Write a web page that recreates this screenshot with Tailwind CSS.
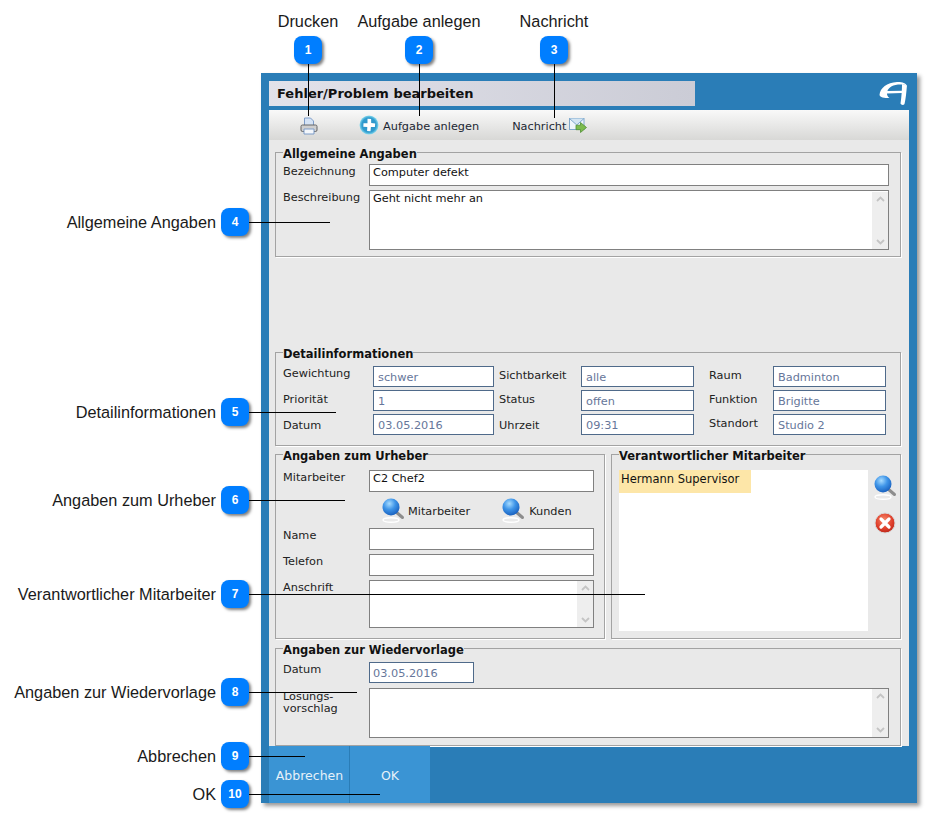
<!DOCTYPE html>
<html lang="de">
<head>
<meta charset="UTF-8">
<meta name="viewport" content="width=device-width,initial-scale=1">
<title>Fehler/Problem bearbeiten</title>
<script src="https://cdn.jsdelivr.net/npm/@tailwindcss/browser@4"></script>
</head>
<body class="bg-white font-['DejaVu_Sans',sans-serif] text-[11.3px] leading-[14px] text-[#222]">
<svg width="0" height="0" class="absolute">
  <defs>
    <radialGradient id="lens" cx="40%" cy="30%" r="70%"><stop offset="0" stop-color="#a8dcff"/><stop offset=".5" stop-color="#3f95e8"/><stop offset="1" stop-color="#1a62c0"/></radialGradient>
    <radialGradient id="redball" cx="45%" cy="35%" r="70%"><stop offset="0" stop-color="#f58a6c"/><stop offset=".6" stop-color="#e0402c"/><stop offset="1" stop-color="#b52418"/></radialGradient>
    <radialGradient id="plusball" cx="50%" cy="50%" r="52%"><stop offset="0" stop-color="#2f8fc4"/><stop offset=".72" stop-color="#2f9ccf"/><stop offset="1" stop-color="#93e2f2"/></radialGradient>
    <symbol id="magnifier" viewBox="0 0 24 26">
      <ellipse cx="10" cy="23" rx="8" ry="2.2" fill="none" stroke="#fff" stroke-width="1.4"/>
      <path d="M14.5 14.5l7 6" stroke="#8d8d8d" stroke-width="3" stroke-linecap="round"/>
      <circle cx="10" cy="10" r="8.5" fill="url(#lens)"/>
    </symbol>
  </defs>
</svg>

<div class="relative w-[926px] h-[820px] overflow-hidden pt-[73px] pl-[261px]">
  <!-- dialog -->
  <div class="w-[656px] h-[730px] bg-[#2a7db7] shadow-[3px_3px_4px_rgba(0,0,0,0.4)] pl-[8px] pr-[8px] flex flex-col">
    <div class="h-[37px] shrink-0 flex justify-between">
      <div class="mt-[8px] w-[426px] h-[25px] bg-gradient-to-r from-[#e2e2ea] to-[#cbccd6] pl-[8px] font-bold text-[13px] leading-[25px] text-[#111]">Fehler/Problem bearbeiten</div>
      <svg class="mt-[8px] mr-[1px]" width="30" height="25" viewBox="0 0 30 25" fill="#fff">
        <path d="M1.5 14C2 7 9 1.5 19 1c5-.2 9 1 10 4-2-1.500-5-1.800-9-1.400-7 .7-10 4.400-10.500 6.400L24 9.700V12l-15 .5c0 1.500.5 3 2.500 4.500-5.500 0-9.500-.5-10-3z"/>
        <path d="M24 3l5 1.500c-.5 4.500-1 12.500-2.500 18.500-1 1.500-3.500 1-4-.5 1-6.500 1.500-13.500 1.500-19.500z"/>
      </svg>
    </div>

    <div class="flex-1 flex flex-col min-h-0 bg-[#e9e9e9]">
      <!-- toolbar -->
      <div class="h-[30px] shrink-0 bg-gradient-to-b from-[#f9f9f9] to-[#d8d8d6] flex items-center pl-[31px] text-[#1c2733]">
        <svg width="18" height="18" viewBox="0 0 18 18" fill="none" class="mt-[1px]">
          <path d="M4.500 1h6l3 3v5h-9z" fill="#d5e3f5" stroke="#7d9cc8"/>
          <rect x="1" y="8" width="16" height="6.500" rx="1.500" fill="#cfcfcf" stroke="#666"/>
          <path d="M4 12h10v5H4z" fill="#f4f7fb" stroke="#7d9cc8"/>
        </svg>
        <svg width="20" height="20" viewBox="0 0 20 20" class="ml-[41px] mt-[-1px]">
          <circle cx="10" cy="10" r="9.500" fill="url(#plusball)"/>
          <path d="M8.500 3.800l3.600.3.100 3.900 4 .4-.3 3.500-4 .1-.4 4.200-3.400-.2.200-4.100-4-.1.200-3.600 4 .1z" fill="#fff"/>
        </svg>
        <span class="ml-[4px] mt-[3px]">Aufgabe anlegen</span>
        <span class="ml-[33px] mt-[3px]">Nachricht</span>
        <svg width="18" height="16" viewBox="0 0 18 16" class="ml-[3px] mt-[2px]">
          <rect x=".5" y=".5" width="14.500" height="11" fill="#eef5fb" stroke="#7fa8cc"/>
          <path d="M.5 .5l7.250 6.500L15 .5" fill="#d3e5f3" stroke="#7fa8cc"/>
          <path d="M7 7.200h4.500V4.500L17.500 9.500 11.500 14.500v-2.800H7z" fill="#7dbb4e" stroke="#4f8f34" stroke-width=".8"/>
        </svg>
      </div>

      <!-- form -->
      <div class="flex-1 min-h-0 pl-[6px] pr-[8px] pt-[5px] flex flex-col">
        <fieldset class="h-[112px] shrink-0 border border-[#a3a3a3] shadow-[1px_1px_0_#fff] pl-[7px] pr-[11px] pt-[5px]">
          <legend class="font-bold text-[11.5px] text-[#111] translate-y-[2px]">Allgemeine Angaben</legend>
          <div class="grid grid-cols-[86px_1fr] gap-y-[4px]">
            <label class="pt-[1px]">Bezeichnung</label>
            <input readonly value="Computer defekt" class="h-[22px] border border-[#808080] bg-white px-[3px] pb-[5px] text-[#111]">
            <label class="pt-[1px]">Beschreibung</label>
            <div class="h-[60px] border border-[#808080] bg-white pl-[3px] pt-[1px] flex justify-between text-[#111]">
              <span>Geht nicht mehr an</span>
              <div class="w-[16px] bg-[#eeeeee] flex flex-col justify-between items-center py-[4px]">
                <svg width="9" height="6" viewBox="0 0 9 6" fill="none" stroke="#c4c4c4" stroke-width="1.800"><path d="M1 5l3.500-3.500L8 5"/></svg>
                <svg width="9" height="6" viewBox="0 0 9 6" fill="none" stroke="#c4c4c4" stroke-width="1.800"><path d="M1 1l3.500 3.500L8 1"/></svg>
              </div>
            </div>
          </div>
        </fieldset>

        <fieldset class="h-[101px] shrink-0 mt-[88px] border border-[#a3a3a3] shadow-[1px_1px_0_#fff] pl-[7px] pt-[7px]">
          <legend class="font-bold text-[11.5px] text-[#111] translate-y-[2px]">Detailinformationen</legend>
          <div class="flex">
            <div class="grid grid-cols-[90px_121px] gap-y-[3px]">
              <label class="pt-[1px]">Gewichtung</label>
              <input readonly value="schwer" class="h-[21px] border border-[#4f6a8a] bg-white px-[4px] pt-[1px] text-[#66769a]">
              <label class="pt-[3px]">Priorität</label>
              <input readonly value="1" class="h-[21px] border border-[#4f6a8a] bg-white px-[4px] pt-[1px] text-[#66769a]">
              <label class="pt-[5px]">Datum</label>
              <input readonly value="03.05.2016" class="h-[21px] border border-[#4f6a8a] bg-white px-[4px] pt-[1px] text-[#66769a]">
            </div>
            <div class="ml-[5px] grid grid-cols-[82px_113px] gap-y-[3px]">
              <label class="pt-[3px]">Sichtbarkeit</label>
              <input readonly value="alle" class="h-[21px] border border-[#4f6a8a] bg-white px-[4px] pt-[1px] text-[#66769a]">
              <label class="pt-[3px]">Status</label>
              <input readonly value="offen" class="h-[21px] border border-[#4f6a8a] bg-white px-[4px] pt-[1px] text-[#66769a]">
              <label class="pt-[5px]">Uhrzeit</label>
              <input readonly value="09:31" class="h-[21px] border border-[#4f6a8a] bg-white px-[4px] pt-[1px] text-[#66769a]">
            </div>
            <div class="ml-[15px] grid grid-cols-[64px_113px] gap-y-[3px]">
              <label class="pt-[3px]">Raum</label>
              <input readonly value="Badminton" class="h-[21px] border border-[#4f6a8a] bg-white px-[4px] pt-[1px] text-[#66769a]">
              <label class="pt-[3px]">Funktion</label>
              <input readonly value="Brigitte" class="h-[21px] border border-[#4f6a8a] bg-white px-[4px] pt-[1px] text-[#66769a]">
              <label class="pt-[3px]">Standort</label>
              <input readonly value="Studio 2" class="h-[21px] border border-[#4f6a8a] bg-white px-[4px] pt-[1px] text-[#66769a]">
            </div>
          </div>
        </fieldset>

        <div class="h-[192px] shrink-0 mt-[1px] flex gap-[6px]">
          <fieldset class="w-[330px] border border-[#a3a3a3] shadow-[1px_1px_0_#fff] pl-[7px] pt-[9px]">
            <legend class="font-bold text-[11.5px] text-[#111] translate-y-[2px]">Angaben zum Urheber</legend>
            <div class="grid grid-cols-[86px_225px]">
              <label class="pt-[1px]">Mitarbeiter</label>
              <input readonly value="C2 Chef2" class="h-[22px] border border-[#808080] bg-white px-[3px] pb-[5px] text-[#111]">
              <div class="col-start-2 h-[36px] flex items-center">
                <svg width="24" height="26" class="ml-[12px] mt-[-1px]"><use href="#magnifier"/></svg>
                <span class="ml-[3px] mt-[4px]">Mitarbeiter</span>
                <svg width="24" height="26" class="ml-[31px] mt-[-1px]"><use href="#magnifier"/></svg>
                <span class="ml-[4px] mt-[4px]">Kunden</span>
              </div>
              <label class="pt-[1px]">Name</label>
              <input readonly class="h-[22px] border border-[#808080] bg-white">
              <label class="mt-[4px] pt-[1px]">Telefon</label>
              <input readonly class="mt-[4px] h-[22px] border border-[#808080] bg-white">
              <label class="mt-[4px] pt-[1px]">Anschrift</label>
              <div class="mt-[4px] h-[48px] border border-[#808080] bg-white flex justify-end">
                <div class="w-[16px] bg-[#eeeeee] flex flex-col justify-between items-center py-[4px]">
                  <svg width="9" height="6" viewBox="0 0 9 6" fill="none" stroke="#c4c4c4" stroke-width="1.800"><path d="M1 5l3.500-3.500L8 5"/></svg>
                  <svg width="9" height="6" viewBox="0 0 9 6" fill="none" stroke="#c4c4c4" stroke-width="1.800"><path d="M1 1l3.500 3.500L8 1"/></svg>
                </div>
              </div>
            </div>
          </fieldset>
          <fieldset class="w-[290px] border border-[#a3a3a3] shadow-[1px_1px_0_#fff] pl-[7px] pt-[9px]">
            <legend class="font-bold text-[11.5px] text-[#111] translate-y-[2px]">Verantwortlicher Mitarbeiter</legend>
            <div class="flex">
              <div class="w-[249px] h-[161px] bg-white">
                <div class="w-[132px] h-[23px] bg-[#fde6a8] pl-[2px] pt-[2px] text-[11.5px] text-[#111]">Hermann Supervisor</div>
              </div>
              <div class="flex flex-col items-center pl-[5px]">
                <svg width="24" height="26" class="mt-[4px]"><use href="#magnifier"/></svg>
                <svg width="22" height="22" viewBox="0 0 22 22" class="mt-[12px]">
                  <circle cx="11" cy="11" r="10" fill="url(#redball)" stroke="#d9d9d9"/>
                  <path d="M7 7l8 8M15 7l-8 8" stroke="#fff" stroke-width="3.200" stroke-linecap="round"/>
                </svg>
              </div>
            </div>
          </fieldset>
        </div>

        <fieldset class="h-[105px] shrink-0 mt-[2px] border border-[#a3a3a3] shadow-[1px_1px_0_#fff] pl-[7px] pr-[11px] pt-[7px]">
          <legend class="font-bold text-[11.5px] text-[#111] translate-y-[2px]">Angaben zur Wiedervorlage</legend>
          <div class="grid grid-cols-[86px_1fr] gap-y-[5px]">
            <label class="pt-[1px]">Datum</label>
            <input readonly value="03.05.2016" class="w-[105px] h-[21px] border border-[#4f6a8a] bg-white px-[3px] pt-[1px] text-[#66769a]">
            <label class="leading-[12px] pt-[3px]">Lösungs-<br>vorschlag</label>
            <div class="h-[50px] border border-[#808080] bg-white flex justify-end">
              <div class="w-[16px] bg-[#eeeeee] flex flex-col justify-between items-center py-[4px]">
                <svg width="9" height="6" viewBox="0 0 9 6" fill="none" stroke="#c4c4c4" stroke-width="1.800"><path d="M1 5l3.500-3.500L8 5"/></svg>
                <svg width="9" height="6" viewBox="0 0 9 6" fill="none" stroke="#c4c4c4" stroke-width="1.800"><path d="M1 1l3.500 3.500L8 1"/></svg>
              </div>
            </div>
          </div>
        </fieldset>
      </div>
    </div>

    <!-- footer -->
    <div class="h-[57px] shrink-0 flex text-[12.5px] text-[#e6f1f9]">
      <button class="w-[81px] bg-[#3a94d4] border-r border-[#2a7db7] pt-[2px] pl-[1px]">Abbrechen</button>
      <button class="w-[80px] bg-[#3a94d4] pt-[2px]">OK</button>
    </div>
  </div>

  <!-- callouts on top -->
  <div class="absolute top-[11px] left-[248px] w-[120px] flex flex-col items-center font-['Liberation_Sans',sans-serif]">
    <span class="text-[16.3px] leading-[20px] text-[#1a1a1a] mb-[5px]">Drucken</span>
    <span class="w-[28px] h-[28px] rounded-lg bg-[#007eff] text-white font-bold text-[12px] flex items-center justify-center shadow-[2px_2px_3px_rgba(0,0,0,0.5)]">1</span>
    <span class="w-[1px] h-[52px] bg-black"></span>
  </div>
  <div class="absolute top-[11px] left-[349px] w-[140px] flex flex-col items-center font-['Liberation_Sans',sans-serif]">
    <span class="text-[16.3px] leading-[20px] text-[#1a1a1a] mb-[5px]">Aufgabe anlegen</span>
    <span class="w-[28px] h-[28px] rounded-lg bg-[#007eff] text-white font-bold text-[12px] flex items-center justify-center shadow-[2px_2px_3px_rgba(0,0,0,0.5)]">2</span>
    <span class="w-[1px] h-[52px] bg-black"></span>
  </div>
  <div class="absolute top-[11px] left-[494px] w-[120px] flex flex-col items-center font-['Liberation_Sans',sans-serif]">
    <span class="text-[16.3px] leading-[20px] text-[#1a1a1a] mb-[5px]">Nachricht</span>
    <span class="w-[28px] h-[28px] rounded-lg bg-[#007eff] text-white font-bold text-[12px] flex items-center justify-center shadow-[2px_2px_3px_rgba(0,0,0,0.5)]">3</span>
    <span class="w-[1px] h-[54px] bg-black"></span>
  </div>

  <div class="absolute left-0 top-[208px] flex items-center font-['Liberation_Sans',sans-serif]">
    <span class="w-[216px] text-right text-[16.3px] leading-[22px] text-[#1a1a1a]">Allgemeine Angaben</span>
    <span class="ml-[5px] w-[28px] h-[28px] rounded-lg bg-[#007eff] text-white font-bold text-[12px] flex items-center justify-center shadow-[2px_2px_3px_rgba(0,0,0,0.5)]">4</span>
    <span class="w-[81px] h-[1px] bg-black"></span>
  </div>
  <div class="absolute left-0 top-[398px] flex items-center font-['Liberation_Sans',sans-serif]">
    <span class="w-[216px] text-right text-[16.3px] leading-[22px] text-[#1a1a1a]">Detailinformationen</span>
    <span class="ml-[5px] w-[28px] h-[28px] rounded-lg bg-[#007eff] text-white font-bold text-[12px] flex items-center justify-center shadow-[2px_2px_3px_rgba(0,0,0,0.5)]">5</span>
    <span class="w-[87px] h-[1px] bg-black"></span>
  </div>
  <div class="absolute left-0 top-[486px] flex items-center font-['Liberation_Sans',sans-serif]">
    <span class="w-[216px] text-right text-[16.3px] leading-[22px] text-[#1a1a1a]">Angaben zum Urheber</span>
    <span class="ml-[5px] w-[28px] h-[28px] rounded-lg bg-[#007eff] text-white font-bold text-[12px] flex items-center justify-center shadow-[2px_2px_3px_rgba(0,0,0,0.5)]">6</span>
    <span class="w-[96px] h-[1px] bg-black"></span>
  </div>
  <div class="absolute left-0 top-[580px] flex items-center font-['Liberation_Sans',sans-serif]">
    <span class="w-[216px] text-right text-[16.3px] leading-[22px] text-[#1a1a1a]">Verantwortlicher Mitarbeiter</span>
    <span class="ml-[5px] w-[28px] h-[28px] rounded-lg bg-[#007eff] text-white font-bold text-[12px] flex items-center justify-center shadow-[2px_2px_3px_rgba(0,0,0,0.5)]">7</span>
    <span class="w-[396px] h-[1px] bg-black"></span>
  </div>
  <div class="absolute left-0 top-[678px] flex items-center font-['Liberation_Sans',sans-serif]">
    <span class="w-[216px] text-right text-[16.3px] leading-[22px] text-[#1a1a1a]">Angaben zur Wiedervorlage</span>
    <span class="ml-[5px] w-[28px] h-[28px] rounded-lg bg-[#007eff] text-white font-bold text-[12px] flex items-center justify-center shadow-[2px_2px_3px_rgba(0,0,0,0.5)]">8</span>
    <span class="w-[108px] h-[1px] bg-black"></span>
  </div>
  <div class="absolute left-0 top-[742px] flex items-center font-['Liberation_Sans',sans-serif]">
    <span class="w-[216px] text-right text-[16.3px] leading-[22px] text-[#1a1a1a]">Abbrechen</span>
    <span class="ml-[5px] w-[28px] h-[28px] rounded-lg bg-[#007eff] text-white font-bold text-[12px] flex items-center justify-center shadow-[2px_2px_3px_rgba(0,0,0,0.5)]">9</span>
    <span class="w-[56px] h-[1px] bg-black"></span>
  </div>
  <div class="absolute left-0 top-[780px] flex items-center font-['Liberation_Sans',sans-serif]">
    <span class="w-[216px] text-right text-[16.3px] leading-[22px] text-[#1a1a1a]">OK</span>
    <span class="ml-[5px] w-[28px] h-[28px] rounded-lg bg-[#007eff] text-white font-bold text-[12px] flex items-center justify-center shadow-[2px_2px_3px_rgba(0,0,0,0.5)]">10</span>
    <span class="w-[131px] h-[1px] bg-black"></span>
  </div>
</div>
</body>
</html>
